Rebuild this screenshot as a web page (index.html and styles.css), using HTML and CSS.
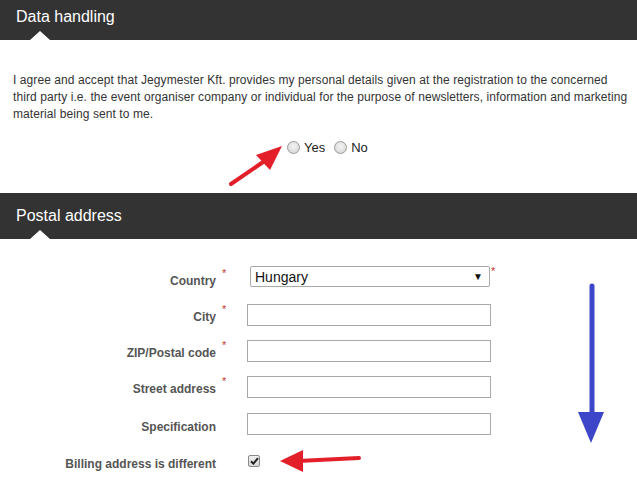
FILE: index.html
```html
<!DOCTYPE html>
<html>
<head>
<meta charset="utf-8">
<link rel="stylesheet" href="styles.css">
</head>
<body>
<div class="page">
  <div class="bar bar-1"><h2 class="bar-title">Data handling</h2><span class="notch"></span></div>
  <section class="consent">
    <p class="consent-text">I agree and accept that Jegymester Kft. provides my personal details given at the registration to the concerned<br>third party i.e. the event organiser company or individual for the purpose of newsletters, information and marketing<br>material being sent to me.</p>
    <div class="radios">
      <label class="radio-opt"><span class="radio"></span>Yes</label>
      <label class="radio-opt"><span class="radio"></span>No</label>
    </div>
  </section>
  <div class="bar bar-2"><h2 class="bar-title">Postal address</h2><span class="notch"></span></div>
  <section class="form">
    <div class="row row-country">
      <span class="label">Country</span><span class="star">*</span>
      <div class="select"><span>Hungary</span><span class="caret">&#9660;</span></div><span class="star star-after">*</span>
    </div>
    <div class="row">
      <span class="label">City</span><span class="star">*</span>
      <span class="input"></span>
    </div>
    <div class="row">
      <span class="label">ZIP/Postal code</span><span class="star">*</span>
      <span class="input"></span>
    </div>
    <div class="row">
      <span class="label">Street address</span><span class="star">*</span>
      <span class="input"></span>
    </div>
    <div class="row row-spec">
      <span class="label">Specification</span><span class="star"></span>
      <span class="input"></span>
    </div>
    <div class="row row-billing">
      <span class="label">Billing address is different</span><span class="star"></span>
      <span class="checkbox"><svg width="9" height="8" viewBox="0 0 9 8"><path d="M1 4.2 L3.4 6.6 L8 1.2" fill="none" stroke="#222" stroke-width="2"/></svg></span>
    </div>
  </section>
  <svg class="annot" width="637" height="482" viewBox="0 0 637 482">
    <line x1="231" y1="184" x2="266" y2="160" stroke="#e3202a" stroke-width="4" stroke-linecap="round"/>
    <polygon points="282,146 256,155 270,170" fill="#e3202a"/>
    <line x1="359" y1="458" x2="298" y2="461" stroke="#e3202a" stroke-width="4" stroke-linecap="round"/>
    <polygon points="280,461 303,450 303,472" fill="#e3202a"/>
    <line x1="592" y1="286" x2="592" y2="415" stroke="#3d45c8" stroke-width="5" stroke-linecap="round"/>
    <polygon points="578,412 604,412 591,443" fill="#3d45c8"/>
  </svg>
</div>
</body>
</html>
```
FILE: styles.css
```css
* { box-sizing: border-box; }
html, body { margin: 0; padding: 0; background: #fff; }
body { font-family: Arial, "Liberation Sans", sans-serif; color: #333; }
.page { position: relative; width: 637px; height: 482px; overflow: hidden; }

.bar { position: relative; background: #333333; padding-left: 16px; }
.bar-1 { height: 40px; padding-top: 6px; }
.bar-2 { height: 46px; padding-top: 12px; }
.bar-title { margin: 0; font-weight: normal; font-size: 16px; line-height: 22px; color: #fff; }
.notch {
  position: absolute; left: 30px; bottom: 0; width: 0; height: 0;
  border-left: 10px solid transparent; border-right: 10px solid transparent;
  border-bottom: 9px solid #fff;
}

.consent { padding: 32px 0 0 13px; height: 153px; }
.consent-text { margin: 0; font-size: 12px; line-height: 17px; white-space: nowrap; letter-spacing: 0.08px; color: #333; }
.radios { display: flex; justify-content: flex-start; padding-left: 274px; margin-top: 17px; gap: 9px; font-size: 13px; }
.radio-opt { display: flex; align-items: center; gap: 4px; color: #222; }
.radio {
  width: 13px; height: 13px; border-radius: 50%; border: 1px solid #9a9a9a;
  background: radial-gradient(circle at 50% 40%, #f4f4f4 0%, #dcdcdc 70%, #cfcfcf 100%);
}

.form { padding-top: 20px; }
.row { display: flex; align-items: center; height: 36px; }
.row-spec { height: 39px; padding-top: 2px; }
.row-billing { height: 36px; padding-top: 1px; }
.label { width: 216px; text-align: right; font-size: 12px; font-weight: bold; color: #555; padding-top: 7px; }
.star { width: 31px; padding-left: 6px; color: #c0392b; font-size: 11px; align-self: flex-start; padding-top: 8px; }
.select {
  display: flex; justify-content: space-between; align-items: center;
  width: 240px; height: 21px; margin-left: 3px; border: 1px solid #a9a9a9; border-radius: 2px;
  padding: 0 6px 0 4px; font-size: 14px; color: #111; margin-top: -1px;
}
.caret { font-size: 10px; color: #111; }
.star-after { width: auto; padding-left: 1px; padding-top: 6px; }
.input { display: block; width: 244px; height: 22px; border: 1px solid #a9a9a9; background: #fff; margin-top: 4px; }
.row-spec .input { margin-top: 0; }
.checkbox {
  display: flex; align-items: center; justify-content: center;
  width: 12px; height: 12px; margin-left: 1px; margin-top: 1px;
  border: 1px solid #8a8a8a; border-radius: 2px; background: linear-gradient(#f0f0f0, #d8d8d8);
}
.annot { position: absolute; left: 0; top: 0; pointer-events: none; }
```
